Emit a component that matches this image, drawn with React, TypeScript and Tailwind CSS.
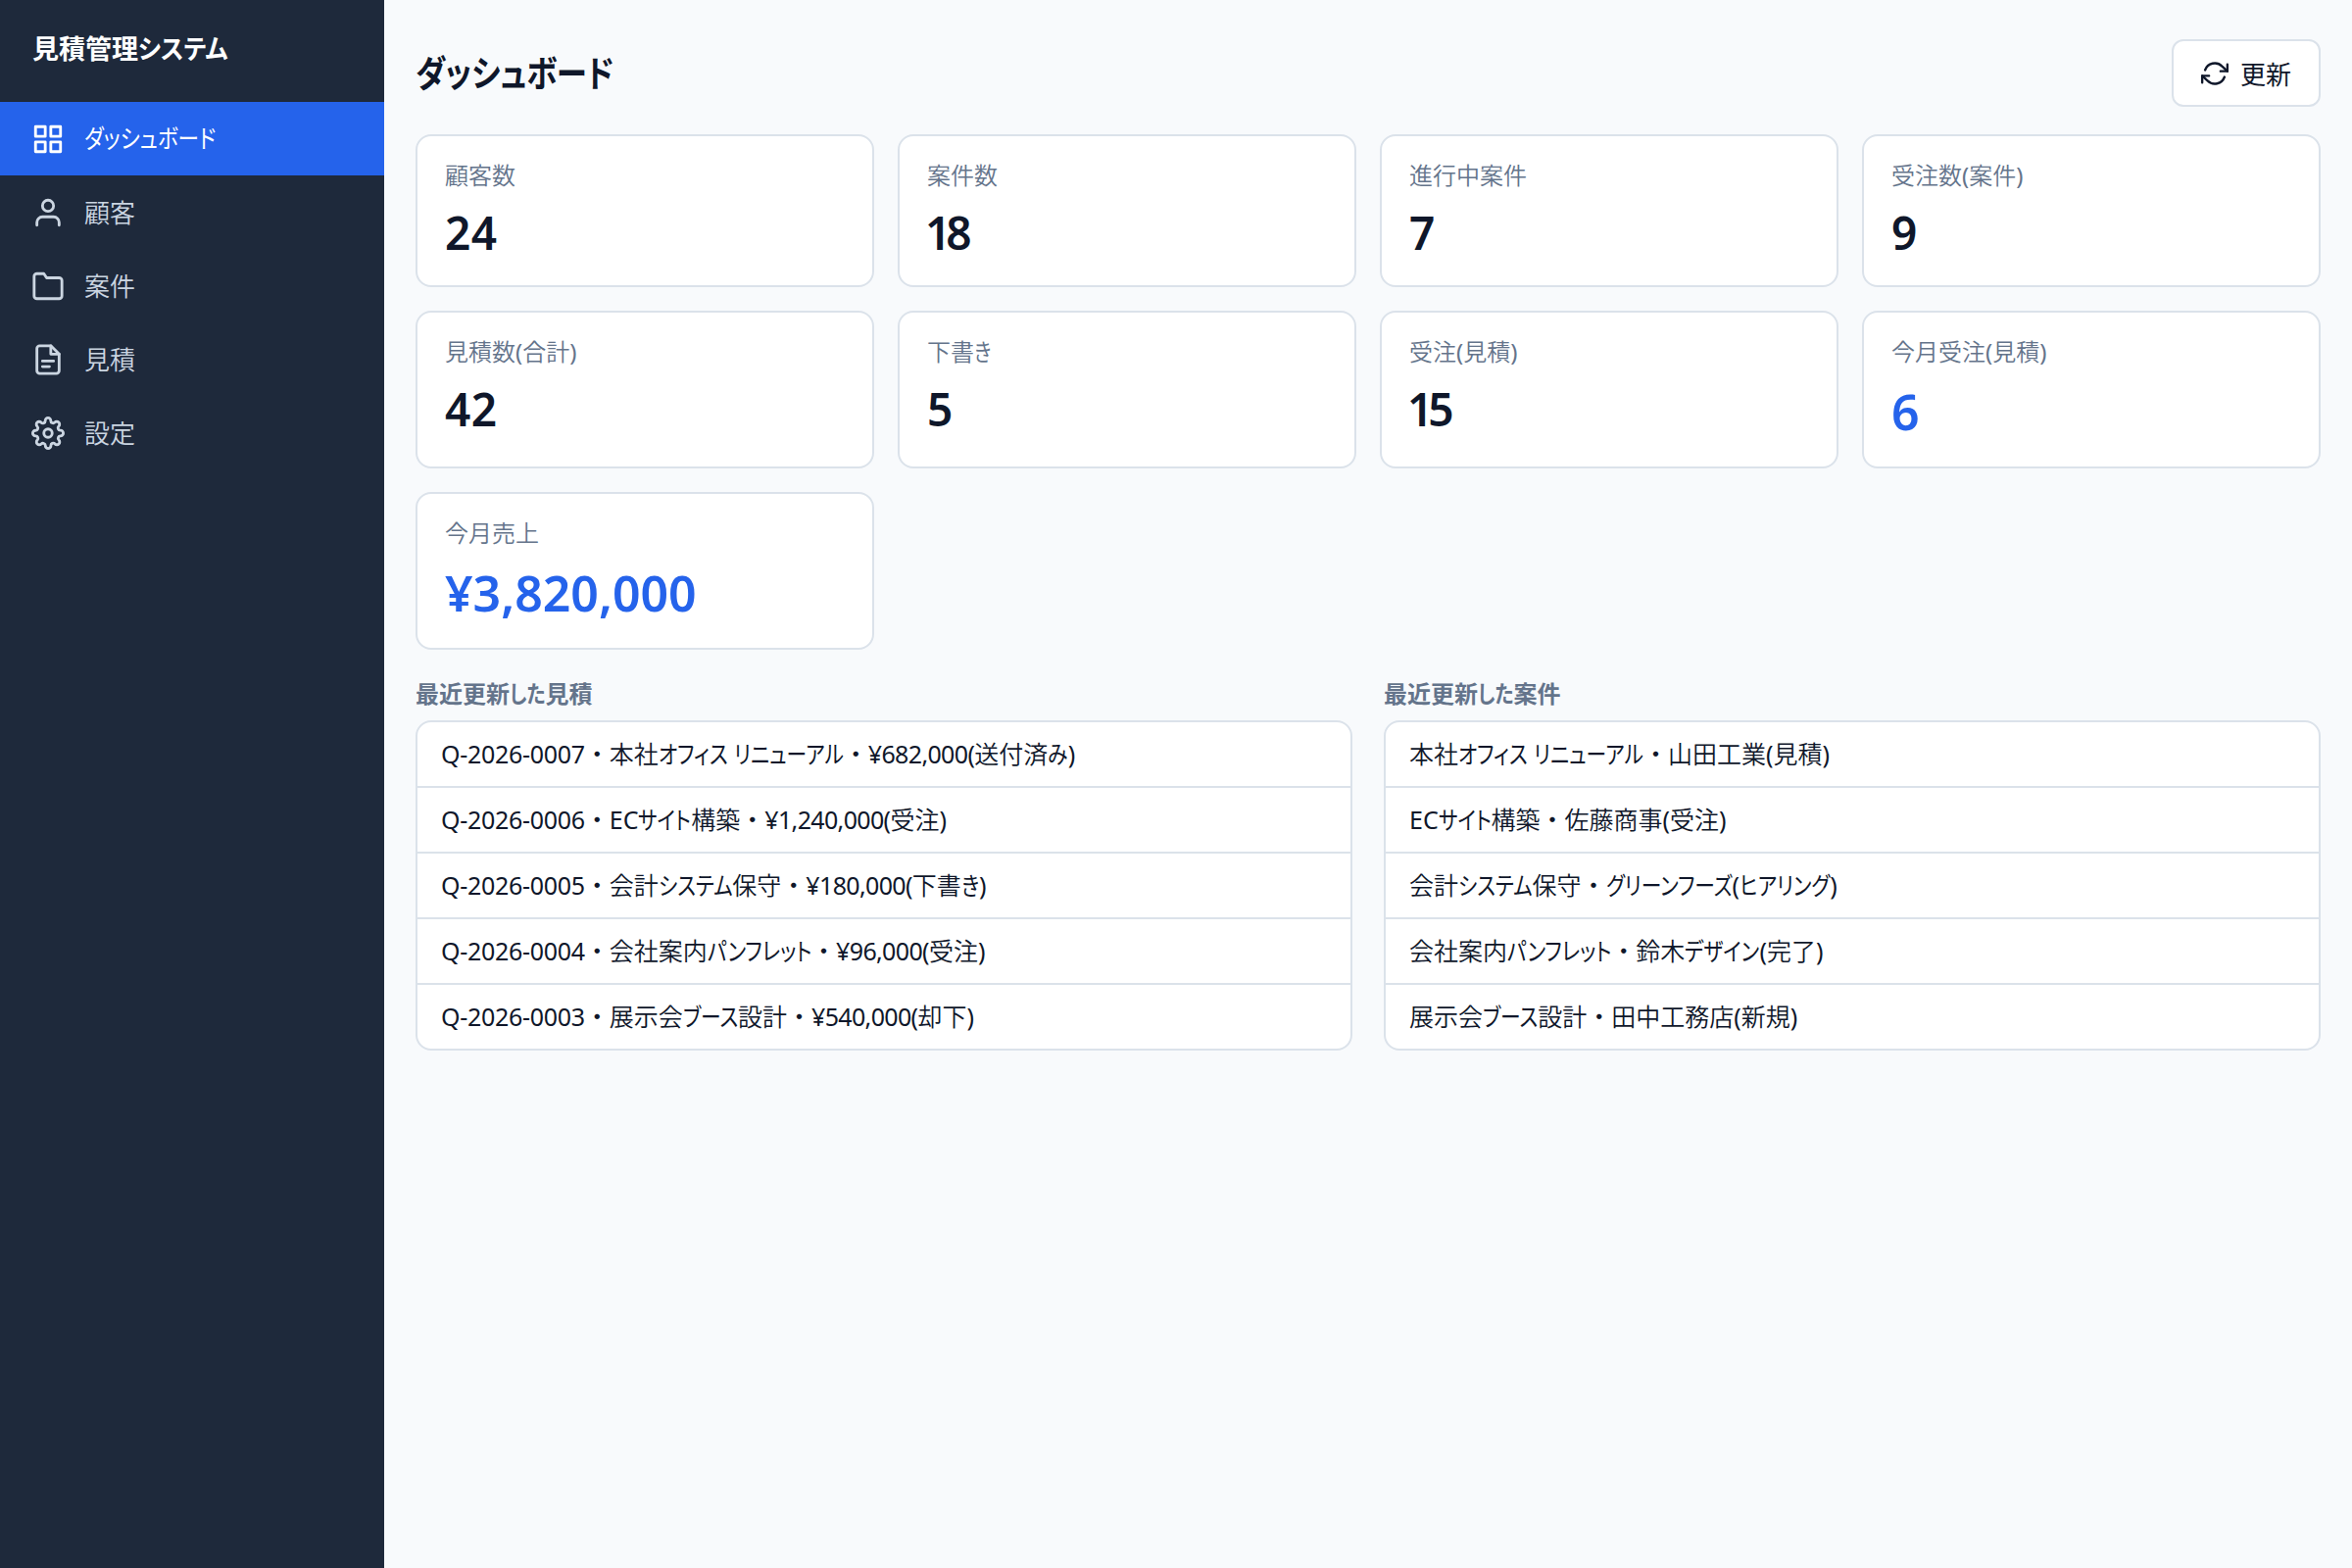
import { useLayoutEffect, useRef, useState } from "react";
import { FiFolder, FiGrid, FiRefreshCw, FiSettings, FiUser } from "react-icons/fi";

const navItems = [
  { label: "ダッシュボード", icon: <FiGrid size={34} />, active: true },
  { label: "顧客", icon: <FiUser size={34} /> },
  { label: "案件", icon: <FiFolder size={34} /> },
  { label: "見積", icon: <FileIcon /> },
  { label: "設定", icon: <FiSettings size={34} /> },
];

const stats = [
  { label: "顧客数", value: "24" },
  { label: "案件数", value: "18" },
  { label: "進行中案件", value: "7" },
  { label: "受注数(案件)", value: "9" },
  { label: "見積数(合計)", value: "42" },
  { label: "下書き", value: "5" },
  { label: "受注(見積)", value: "15" },
  { label: "今月受注(見積)", value: "6", highlight: true },
  { label: "今月売上", value: "¥3,820,000", highlight: true },
];

const quotes = [
  "Q-2026-0007・本社オフィス リニューアル・¥682,000(送付済み)",
  "Q-2026-0006・ECサイト構築・¥1,240,000(受注)",
  "Q-2026-0005・会計システム保守・¥180,000(下書き)",
  "Q-2026-0004・会社案内パンフレット・¥96,000(受注)",
  "Q-2026-0003・展示会ブース設計・¥540,000(却下)",
];

const projects = [
  "本社オフィス リニューアル・山田工業(見積)",
  "ECサイト構築・佐藤商事(受注)",
  "会計システム保守・グリーンフーズ(ヒアリング)",
  "会社案内パンフレット・鈴木デザイン(完了)",
  "展示会ブース設計・田中工務店(新規)",
];

function FileIcon() {
  return (
    <svg
      width="34"
      height="34"
      viewBox="0 0 24 24"
      fill="none"
      stroke="currentColor"
      strokeWidth="2"
      strokeLinecap="round"
      strokeLinejoin="round"
    >
      <path d="M14 2H6a2 2 0 0 0-2 2v16a2 2 0 0 0 2 2h12a2 2 0 0 0 2-2V8z" />
      <path d="M14 2v6h6M8 13h8M8 17h5" />
    </svg>
  );
}

// Condensed kana: squeeze the run, then take back the width it no longer uses
function Kana({ children, scale }: { children: string; scale: number }) {
  const ref = useRef<HTMLSpanElement>(null);
  const [width, setWidth] = useState(0);

  useLayoutEffect(() => {
    if (ref.current) setWidth(ref.current.offsetWidth);
  }, [children]);

  return (
    <span
      ref={ref}
      className="inline-block origin-left"
      style={{ transform: `scaleX(${scale})`, marginRight: -width * (1 - scale) }}
    >
      {children}
    </span>
  );
}

function Text({ children, bold, kanaScale = 0.83 }: { children: string; bold?: boolean; kanaScale?: number }) {
  const runs = children.match(/[ぁ-んァ-ヺー]+|・|[一-龠]+|[^ぁ-んァ-ヺー・一-龠]+/g) ?? [];
  return (
    <span className="whitespace-pre">
      {runs.map((run, i) => {
        if (run === "・") {
          return (
            <span key={i} className="[font-feature-settings:normal]">
              {run}
            </span>
          );
        }
        if (/[ぁ-んァ-ヺー]/.test(run)) {
          return (
            <Kana key={i} scale={kanaScale}>
              {run}
            </Kana>
          );
        }
        if (/[一-龠]/.test(run) && !bold) {
          return (
            <span key={i} className="font-[350]">
              {run}
            </span>
          );
        }
        if (run.startsWith("Q-")) {
          return (
            <span key={i} className="tracking-[-0.3px]">
              {run}
            </span>
          );
        }
        if (run.startsWith("¥")) {
          return (
            <span key={i} className="tracking-[-0.65px]">
              {run}
            </span>
          );
        }
        return <span key={i}>{run}</span>;
      })}
    </span>
  );
}

function StatValue({ value, highlight }: { value: string; highlight?: boolean }) {
  if (highlight) {
    return <div className="mt-2.5 text-[50px] leading-[68px] font-semibold text-[#2563eb]">{value}</div>;
  }
  return (
    <div className="mt-[9px] text-[46px] leading-[64px] font-semibold tracking-[0.5px] text-[#0f172a]">
      {value.startsWith("1") ? (
        <>
          <span className="-ml-0.5 tracking-[-5px]">1</span>
          {value.slice(1)}
        </>
      ) : (
        value
      )}
    </div>
  );
}

function StatCard({ label, value, highlight }: { label: string; value: string; highlight?: boolean }) {
  return (
    <div className="rounded-2xl border-2 border-[#dbe2ea] bg-white px-7 pt-[23px]">
      <div className="text-[24px] leading-[34px] text-[#64748b]">
        <Text>{label}</Text>
      </div>
      <StatValue value={value} highlight={highlight} />
    </div>
  );
}

function RecentList({ title, items }: { title: string; items: string[] }) {
  return (
    <section>
      <h2 className="mb-2.5 h-[34px] text-[24px] leading-[33px] font-semibold text-[#64748b]">
        <Text bold>{title}</Text>
      </h2>
      <ul className="divide-y-2 divide-[#dbe2ea] overflow-hidden rounded-2xl border-2 border-[#dbe2ea] bg-white">
        {items.map((item) => (
          <li key={item} className="flex h-[67px] items-center px-6 text-[25px] last:h-[65px]">
            <Text>{item}</Text>
          </li>
        ))}
      </ul>
    </section>
  );
}

export default function App() {
  return (
    <div
      lang="ja"
      className="flex h-[1600px] w-[2400px] bg-[#f8fafc] font-['Noto_Sans','Noto_Sans_CJK_JP',sans-serif] text-[#0f172a] [font-feature-settings:'palt']"
    >
      {/* Sidebar */}
      <aside className="w-[392px] shrink-0 bg-[#1e293b]">
        <div className="h-[104px] px-[33px] pt-8 text-[27px] leading-9 font-bold text-white">
          <Text bold kanaScale={0.92}>
            見積管理システム
          </Text>
        </div>
        <nav>
          {navItems.map((item) => (
            <a
              key={item.label}
              className={
                item.active
                  ? "flex h-[75px] items-center gap-5 bg-[#2563eb] px-8 text-[26px] text-white"
                  : "flex h-[75px] items-center gap-5 px-8 pt-px text-[26px] text-[#cbd5e1]"
              }
            >
              {item.icon}
              <Text>{item.label}</Text>
            </a>
          ))}
        </nav>
      </aside>

      {/* Main */}
      <main className="flex-1 px-8 pt-10">
        <header className="flex h-[69px] items-center justify-between">
          <h1 className="text-[37px] font-semibold">
            <Text bold kanaScale={0.85}>
              ダッシュボード
            </Text>
          </h1>
          <button className="flex h-[69px] w-[152px] items-center gap-3 rounded-xl border-2 border-[#dbe2ea] bg-white pl-7 text-[26px]">
            <FiRefreshCw size={28} />
            <span className="pt-[3px]">更新</span>
          </button>
        </header>

        <div className="mt-7 grid grid-cols-4 grid-rows-[156px_161px_161px] gap-6">
          {stats.map((stat) => (
            <StatCard key={stat.label} {...stat} />
          ))}
        </div>

        <div className="mt-7 grid grid-cols-2 gap-8">
          <RecentList title="最近更新した見積" items={quotes} />
          <RecentList title="最近更新した案件" items={projects} />
        </div>
      </main>
    </div>
  );
}
